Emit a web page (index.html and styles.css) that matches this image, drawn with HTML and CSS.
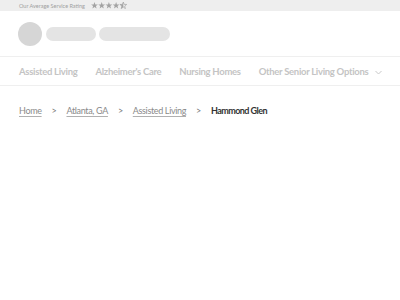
FILE: index.html
```html
<!DOCTYPE html>
<html lang="en">
<head>
<meta charset="UTF-8">
<meta name="viewport" content="width=device-width, initial-scale=1.0">
<title>Hammond Glen</title>
<link rel="stylesheet" href="styles.css">
</head>
<body>

<div class="topbar">
    <span class="rating-label">Our Average Service Rating</span>
    <svg class="stars" width="36" height="7" viewBox="0 0 36 7">
        <defs>
            <path id="star" d="M3.5 0 L4.35 2.4 L6.9 2.45 L4.9 4 L5.6 6.6 L3.5 5.1 L1.4 6.6 L2.1 4 L0.1 2.45 L2.65 2.4 Z"/>
        </defs>
        <use href="#star" x="0" fill="#a3a3a3"/>
        <use href="#star" x="7.2" fill="#a3a3a3"/>
        <use href="#star" x="14.4" fill="#a3a3a3"/>
        <use href="#star" x="21.6" fill="#a3a3a3"/>
        <use href="#star" x="28.8" fill="none" stroke="#a3a3a3" stroke-width="0.7"/>
        <path d="M3.5 0 L2.65 2.4 L0.1 2.45 L2.1 4 L1.4 6.6 L3.5 5.1 Z" transform="translate(28.8 0)" fill="#a3a3a3"/>
    </svg>
</div>

<header class="header">
    <div class="avatar"></div>
    <div class="pill pill-short"></div>
    <div class="pill pill-long"></div>
</header>

<nav class="nav">
    <a href="#">Assisted Living</a>
    <a href="#">Alzheimer's Care</a>
    <a href="#">Nursing Homes</a>
    <a href="#" class="dropdown">Other Senior Living Options
        <svg width="7" height="5" viewBox="0 0 7 5"><path d="M0.5 1 L3.5 4 L6.5 1" fill="none" stroke="#c8c8c8" stroke-width="1"/></svg>
    </a>
</nav>

<div class="breadcrumb">
    <a href="#">Home</a>
    <span class="sep">&gt;</span>
    <a href="#">Atlanta, GA</a>
    <span class="sep">&gt;</span>
    <a href="#">Assisted Living</a>
    <span class="sep">&gt;</span>
    <span class="current">Hammond Glen</span>
</div>

</body>
</html>
```

FILE: styles.css
```css
body {
    font-family: Lato, "Open Sans", sans-serif;
    margin: 0;
    padding: 0;
    background-color: #fff;
}
.topbar {
    height: 11px;
    background-color: #eeeeee;
    display: flex;
    align-items: center;
    padding-left: 19px;
    font-size: 5.5px;
    color: #a0a0a0;
}
.rating-label {
    margin-right: 6px;
}
.header {
    height: 45px;
    display: flex;
    align-items: center;
    padding-left: 18px;
    border-bottom: 1px solid #efefef;
}
.avatar {
    width: 24px;
    height: 24px;
    border-radius: 50%;
    background-color: #d6d6d6;
    margin-right: 4px;
}
.pill {
    height: 14px;
    border-radius: 7px;
    background-color: #e4e4e4;
    margin-right: 3px;
}
.pill-short {
    width: 50px;
}
.pill-long {
    width: 71px;
}
.nav {
    height: 28px;
    display: flex;
    align-items: center;
    gap: 18px;
    padding-left: 19px;
    border-bottom: 1px solid #efefef;
    white-space: nowrap;
}
.nav a {
    font-size: 9.5px;
    letter-spacing: -0.3px;
    font-weight: bold;
    color: #c4c4c4;
    text-decoration: none;
}
.dropdown svg {
    margin-left: 5px;
    vertical-align: middle;
}
.breadcrumb {
    padding: 19px 19px;
    display: flex;
    align-items: center;
    font-size: 9px;
    letter-spacing: -0.35px;
    white-space: nowrap;
}
.breadcrumb a {
    color: #8a8a8a;
    text-decoration: underline;
    text-decoration-color: #b0b0b0;
    text-underline-offset: 2px;
}
.sep {
    color: #777;
    margin: 0 10px;
}
.current {
    color: #333;
    font-weight: bold;
    letter-spacing: -0.55px;
}
```
